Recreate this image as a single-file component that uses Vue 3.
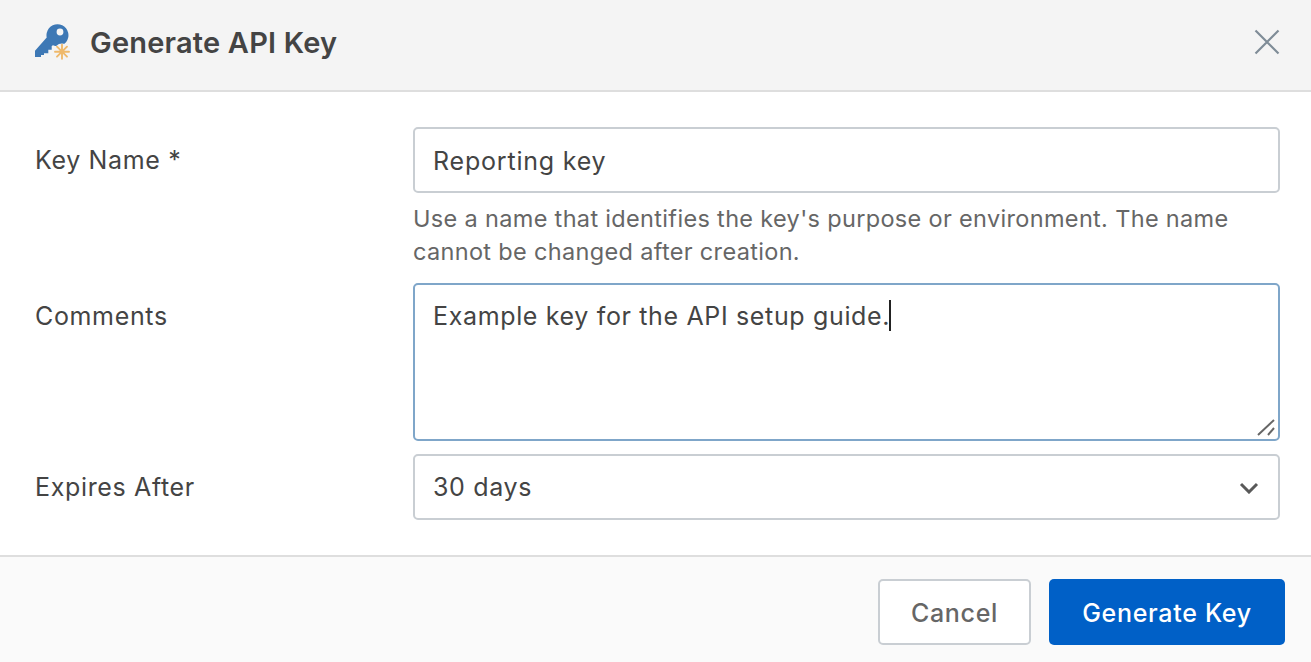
<template>
  <div class="dialog">
    <header class="dialog-header">
      <div class="title">
        <svg class="key-icon" width="36" height="36" viewBox="0 0 36 36">
          <path fill="#3d78b5" fill-rule="evenodd" d="M1 26.800L12.700 13.500A11 11 0 1 1 19 21.300L17.700 22V25.700H14.300V29.300H10V31H7V33H1ZM26 4.600a3.400 3.400 0 1 0 0 6.800 3.400 3.400 0 0 0 0-6.800z" />
          <circle cx="28" cy="27.700" r="8.200" fill="#f4f4f4" />
          <g stroke="#efb96b" stroke-width="1.900" stroke-linecap="round">
            <path d="M28 20.700v14M21 27.700h14M23 22.700l10 10M33 22.700l-10 10" />
          </g>
        </svg>
        <h1>Generate API Key</h1>
      </div>
      <button type="button" class="close-btn" aria-label="Close">
        <svg width="26" height="26" viewBox="0 0 26 26">
          <path d="M1.500 1.500l23 23M24.500 1.500l-23 23" stroke="#7f8c97" stroke-width="2.200" fill="none" />
        </svg>
      </button>
    </header>

    <div class="dialog-body">
      <label class="form-row">
        <span class="field-label">Key Name *</span>
        <span class="field">
          <input v-model="form.name" type="text" />
          <span class="help">Use a name that identifies the key's purpose or environment. The name cannot be changed after creation.</span>
        </span>
      </label>

      <label class="form-row">
        <span class="field-label">Comments</span>
        <span class="field textarea-wrap">
          <textarea v-model="form.comments"></textarea>
          <span class="caret"></span>
          <svg class="grip" width="20" height="20" viewBox="0 0 20 20">
            <path d="M2 18L18 3M12 18l6-7" stroke="#666" stroke-width="2" fill="none" />
          </svg>
        </span>
      </label>

      <label class="form-row">
        <span class="field-label">Expires After</span>
        <span class="field select-wrap">
          <select v-model="form.expires">
            <option v-for="opt in expiryOptions" :key="opt" :value="opt">{{ opt }}</option>
          </select>
          <svg class="chevron" width="20" height="12" viewBox="0 0 20 12">
            <path d="M2 2l8 8 8-8" stroke="#595959" stroke-width="3" fill="none" />
          </svg>
        </span>
      </label>
    </div>

    <footer class="dialog-footer">
      <button type="button" class="btn btn-cancel">Cancel</button>
      <button type="button" class="btn btn-primary">Generate Key</button>
    </footer>
  </div>
</template>

<script setup>
import { ref } from 'vue'

const expiryOptions = ['30 days', '60 days', '90 days', 'Never']

const form = ref({
  name: 'Reporting key',
  comments: 'Example key for the API setup guide.',
  expires: '30 days'
})
</script>

<style scoped>
.dialog { width: 1311px; height: 662px; display: flex; flex-direction: column; background: #fff; color: #444; font-family: Inter, "Liberation Sans", sans-serif; font-size: 25px; letter-spacing: 0.65px; overflow: hidden; }
.dialog-header { height: 92px; box-sizing: border-box; display: flex; align-items: center; justify-content: space-between; padding: 0 31px 6px 34px; background: #f4f4f4; border-bottom: 2px solid #dedede; }
.title { display: flex; align-items: center; gap: 20px; }
.key-icon { display: block; }
.title h1 { margin: 0; font-size: 29px; font-weight: 600; letter-spacing: 0.2px; color: #444; }
.close-btn { border: none; background: none; padding: 0; display: block; cursor: pointer; }
.close-btn svg { display: block; }

.dialog-body { flex: 1; padding: 35px 31px 0 35px; display: flex; flex-direction: column; gap: 13px; }
.form-row { display: grid; grid-template-columns: 378px minmax(0, 1fr); }
.field-label { padding-top: 17px; line-height: 33px; }
.field { display: block; }
.help { display: block; margin: 9px 0 2px; font-size: 23.500px; line-height: 33px; letter-spacing: 0.33px; color: #666; }

input, textarea, select { display: block; width: 100%; box-sizing: border-box; border: 2px solid #c9ced3; border-radius: 5px; background: #fff; color: #444; font: inherit; letter-spacing: inherit; padding: 0 18px; outline: none; margin: 0; }
input { height: 66px; padding-top: 2px; letter-spacing: 0.8px; }
textarea { height: 158px; padding-top: 15px; line-height: 33px; resize: none; border-color: #7fa6c9; }
select { height: 66px; appearance: none; }
.textarea-wrap, .select-wrap { position: relative; }
.caret { position: absolute; left: 476px; top: 17px; width: 2px; height: 31px; background: #222; }
.grip { position: absolute; right: 4px; bottom: 4px; pointer-events: none; }
.chevron { position: absolute; right: 21px; top: 28px; pointer-events: none; }

.dialog-footer { height: 107px; box-sizing: border-box; display: flex; justify-content: flex-end; align-items: flex-start; gap: 18px; padding: 22px 26px 0 0; background: #fafafa; border-top: 2px solid #dedede; }
.btn { height: 66px; box-sizing: border-box; padding: 2px 0 0; border-radius: 5px; font: inherit; font-weight: 500; letter-spacing: 0.7px; cursor: pointer; }
.btn-cancel { width: 153px; background: #fff; border: 2px solid #c9ced3; color: #666; }
.btn-primary { width: 236px; background: #0060c7; border: none; color: #fff; }
</style>

<style>
body { background: #fff; }
</style>
